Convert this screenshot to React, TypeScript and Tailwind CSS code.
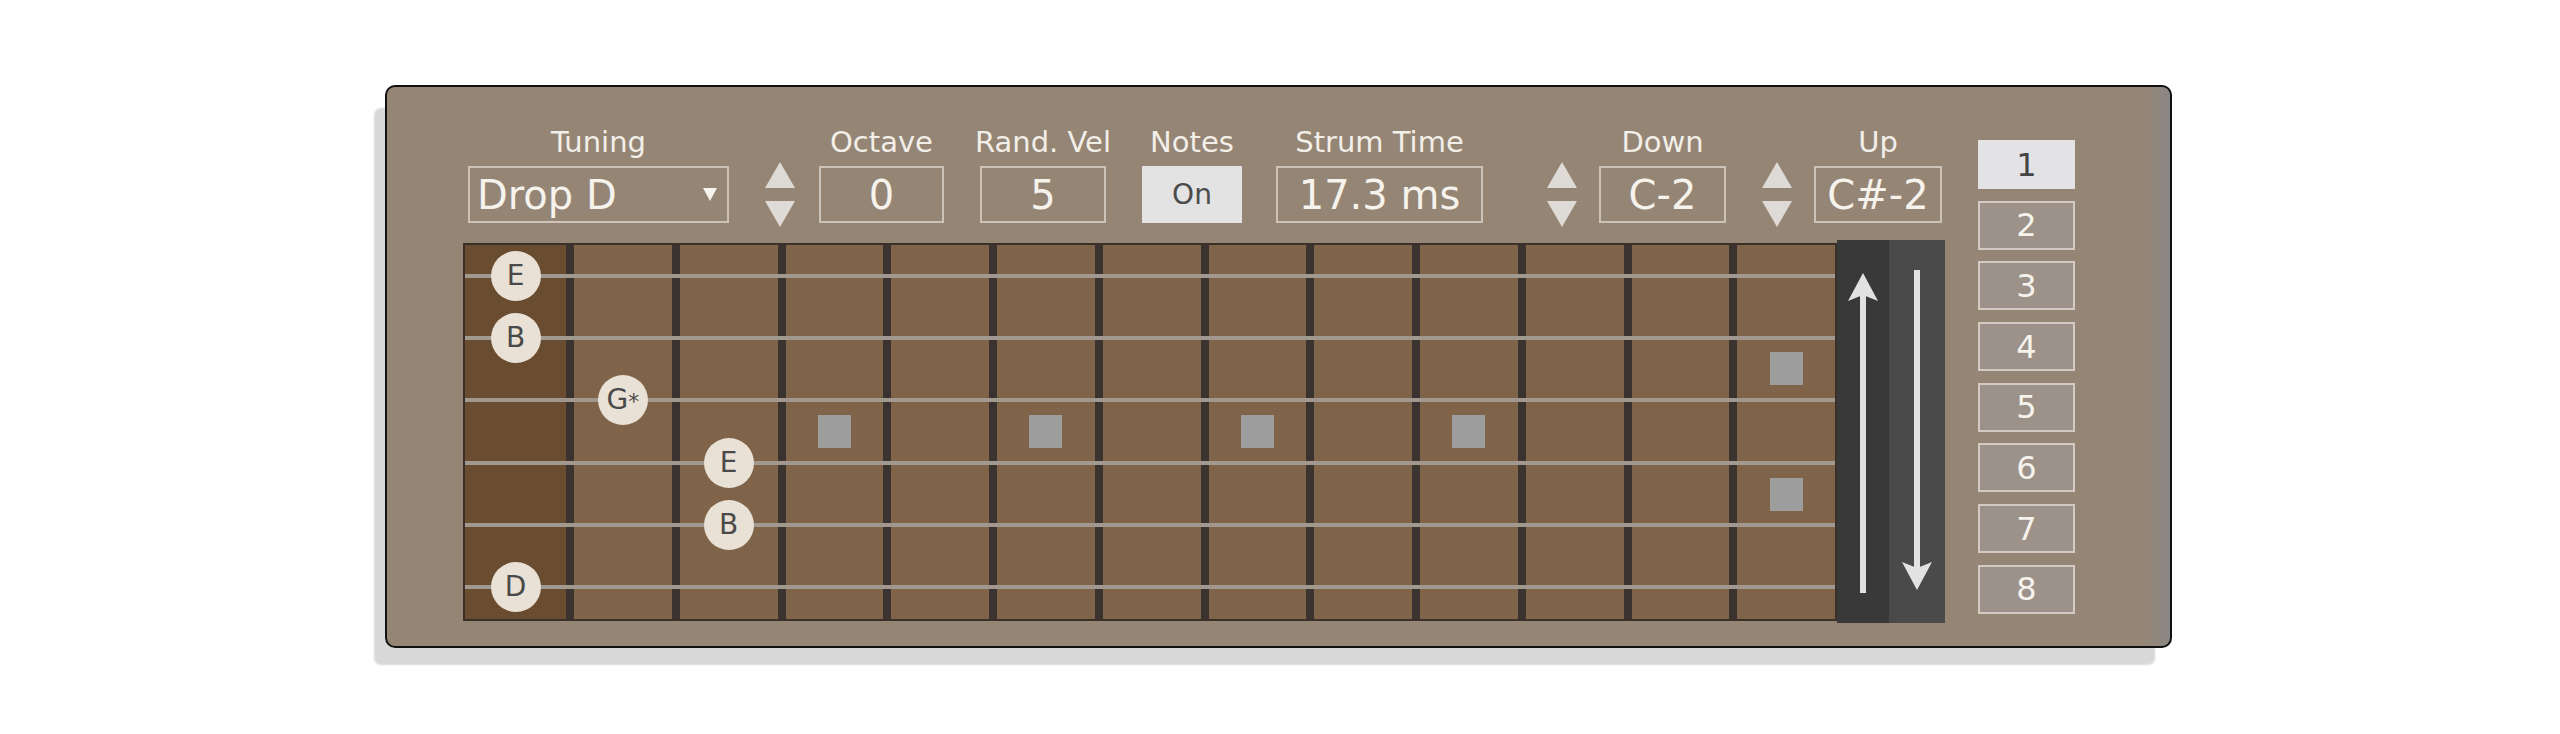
import React from 'react';

// TYPES
type Note = { string: number; fret: number; label: string };

// CONFIG
const NOTES: Note[] = [
  { string: 0, fret: 0, label: 'E' },
  { string: 1, fret: 0, label: 'B' },
  { string: 2, fret: 1, label: 'G*' },
  { string: 3, fret: 2, label: 'E' },
  { string: 4, fret: 2, label: 'B' },
  { string: 5, fret: 0, label: 'D' },
];

const SINGLE_MARKERS = [3, 5, 7, 9];
const DOUBLE_MARKER = 12;
const FRETS = Array.from({ length: 13 }, (_, i) => i);
const STRINGS = Array.from({ length: 6 }, (_, i) => i);

const Label: React.FC<{ text: string }> = ({ text }) => (
  <div className="h-[36px] whitespace-nowrap text-[29px] leading-[36px] text-[#f2eee8]">
    {text}
  </div>
);

const ValueBox: React.FC<{ value: string }> = ({ value }) => (
  <div className="mt-[6px] flex h-[57px] w-full items-center justify-center border-2 border-[#cbc2b8] text-[40px] leading-none text-[#f6f2ec]">
    {value}
  </div>
);

const Stepper: React.FC<{ className?: string }> = ({ className = '' }) => (
  <div className={`mt-[38px] h-[66px] w-[32px] ${className}`}>
    <svg width="32" height="66" viewBox="0 0 32 66" className="block">
      <polygon points="16,0 31,26 1,26" fill="#dedad6" />
      <polygon points="1,39 31,39 16,65" fill="#dedad6" />
    </svg>
  </div>
);

const ControlsRow: React.FC = () => (
  <div className="flex h-[99px] items-start">
    {/* Tuning */}
    <div className="ml-[5px] flex w-[261px] flex-col items-center">
      <Label text="Tuning" />
      <div className="mt-[6px] flex h-[57px] w-full items-center justify-between border-2 border-[#cbc2b8] pl-[7px] pr-[10px] text-[40px] leading-none text-[#f6f2ec]">
        <span>Drop D</span>
        <svg width="14" height="13" viewBox="0 0 14 13">
          <polygon points="0,0 14,0 7,13" fill="#f6f2ec" />
        </svg>
      </div>
    </div>

    <Stepper className="ml-[35px]" />

    <div className="ml-[23px] flex w-[125px] flex-col items-center">
      <Label text="Octave" />
      <ValueBox value="0" />
    </div>

    <div className="ml-[36px] flex w-[126px] flex-col items-center">
      <Label text="Rand. Vel" />
      <ValueBox value="5" />
    </div>

    <div className="ml-[36px] flex w-[100px] flex-col items-center">
      <Label text="Notes" />
      <div className="mt-[6px] flex h-[57px] w-full items-center justify-center bg-[#e3e3e3] text-[28px] leading-none text-[#4b4b4b]">
        On
      </div>
    </div>

    <div className="ml-[34px] flex w-[207px] flex-col items-center">
      <Label text="Strum Time" />
      <ValueBox value="17.3 ms" />
    </div>

    <Stepper className="ml-[63px]" />

    <div className="ml-[21px] flex w-[127px] flex-col items-center">
      <Label text="Down" />
      <ValueBox value="C-2" />
    </div>

    <Stepper className="ml-[35px]" />

    <div className="ml-[21px] flex w-[128px] flex-col items-center">
      <Label text="Up" />
      <ValueBox value="C#-2" />
    </div>
  </div>
);

const Marker: React.FC = () => <div className="h-[33px] w-[33px] bg-[#9d9d9d]" />;

const NoteDot: React.FC<{ label: string }> = ({ label }) => (
  <div className="flex h-[50px] w-[50px] items-center justify-center rounded-full bg-[#e9e1d5] text-[28px] leading-none text-[#4a4a4a]">
    {label === 'G*' ? (
      <span>
        G<span className="text-[22px]">*</span>
      </span>
    ) : (
      label
    )}
  </div>
);

const Fretboard: React.FC = () => (
  <div className="relative box-border flex h-[378px] w-[1374px] border-2 border-[#3a3029] bg-[#7f6449]">
    {/* Fret columns and inlay markers */}
    {FRETS.map((fret) =>
      fret === 0 ? (
        <div key={fret} className="w-[101px] bg-[#6a4c30]" />
      ) : (
        <div
          key={fret}
          className="flex flex-1 flex-col items-center justify-center gap-[93px] border-l-[8px] border-[#3a3330]"
        >
          {SINGLE_MARKERS.includes(fret) && <Marker />}
          {fret === DOUBLE_MARKER && (
            <>
              <Marker />
              <Marker />
            </>
          )}
        </div>
      ),
    )}

    {/* Strings */}
    <div className="pointer-events-none absolute inset-0 flex flex-col">
      {STRINGS.map((s) => (
        <div key={s} className="flex flex-1 items-center">
          <div className="h-[4px] w-full bg-[#a19890]" />
        </div>
      ))}
    </div>

    {/* Played notes */}
    <div className="absolute inset-0 flex">
      {FRETS.map((fret) => (
        <div
          key={fret}
          className={fret === 0 ? 'flex w-[101px] flex-col' : 'flex flex-1 flex-col pl-[8px]'}
        >
          {STRINGS.map((s) => {
            const note = NOTES.find((n) => n.string === s && n.fret === fret);
            return (
              <div key={s} className="flex flex-1 items-center justify-center">
                {note && <NoteDot label={note.label} />}
              </div>
            );
          })}
        </div>
      ))}
    </div>
  </div>
);

// Up-pointing arrow; the down one is the same drawing turned round
const StrumArrow: React.FC<{ className?: string }> = ({ className = '' }) => (
  <div className={`flex h-[320px] w-[30px] flex-col items-center ${className}`}>
    <svg width="30" height="28" viewBox="0 0 30 28" className="block shrink-0">
      <polygon points="15,0 30,28 15,22 0,28" fill="#e2e2e2" />
    </svg>
    <div className="-mt-[8px] h-[300px] w-[6px] shrink-0 bg-[#e2e2e2]" />
  </div>
);

const StrumBars: React.FC = () => (
  <div className="flex h-[383px]">
    <div className="flex w-[52px] items-start justify-center bg-[#393939] pt-[33px]">
      <StrumArrow />
    </div>
    <div className="flex w-[56px] items-start justify-center bg-[#4a4a4a] pt-[30px]">
      <StrumArrow className="rotate-180" />
    </div>
  </div>
);

const ClipButtons: React.FC = () => (
  <div className="ml-[33px] mt-[16px] flex w-[97px] flex-col gap-[11.7px]">
    {Array.from({ length: 8 }, (_, i) => i + 1).map((n) =>
      n === 1 ? (
        <div
          key={n}
          className="flex h-[49px] items-center justify-center bg-[#e3e3e5] text-[32px] leading-none text-[#454545]"
        >
          {n}
        </div>
      ) : (
        <div
          key={n}
          className="flex h-[49px] items-center justify-center border-2 border-[#d3cbc3] bg-[#9c9289] text-[32px] leading-none text-[#f6f2ec]"
        >
          {n}
        </div>
      ),
    )}
  </div>
);

export default function App() {
  return (
    <div className="h-[734px] w-full bg-white pl-[385px] pt-[85px] font-['DejaVu_Sans',sans-serif]">
      <div className="box-border flex h-[563px] w-[1787px] items-start rounded-[10px] border-2 border-[#111111] bg-[linear-gradient(90deg,#958575_98.5%,#8b8784_100%)] pl-[76px] pt-[37px] shadow-[-14px_20px_2px_-3px_#d8d8d8]">
        <div className="flex w-[1482px] flex-col">
          <ControlsRow />
          <div className="mt-[17px] flex items-center">
            <Fretboard />
            <StrumBars />
          </div>
        </div>
        <ClipButtons />
      </div>
    </div>
  );
}
